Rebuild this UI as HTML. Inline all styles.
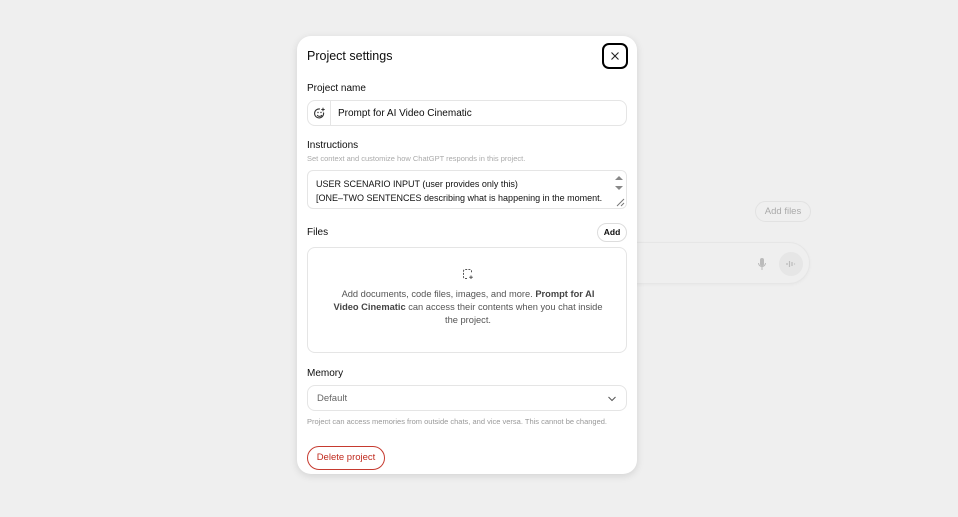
<!DOCTYPE html>
<html><head><style>
*{box-sizing:border-box;margin:0;padding:0}
body{width:958px;height:517px;background:#efefef;font-family:"Liberation Sans",sans-serif;position:relative;overflow:hidden;color:#0d0d0d}
.abs{position:absolute}
.modal{left:297px;top:36px;width:340px;height:438px;background:#fff;border-radius:14px;box-shadow:0 2px 8px rgba(0,0,0,.12)}
.lbl{font-size:10px;color:#0d0d0d}
.box{border:1px solid #e5e5e5;border-radius:8px;background:#fff}
</style></head><body>
<div class="abs" style="left:600px;top:242px;width:210px;height:42px;border-radius:21px;background:#efefef;border:1px solid #e6e6e6;box-shadow:0 1px 3px rgba(0,0,0,.04)"></div>
<div class="abs" style="left:755px;top:201px;width:56px;height:21px;border:1px solid #e2e2e2;border-radius:11px;font-size:9.5px;color:#aaa;text-align:center;line-height:19px">Add files</div>
<svg class="abs" style="left:757px;top:257px" width="10" height="14" viewBox="0 0 10 14"><rect x="3" y="1" width="4" height="8" rx="2" fill="#bbb"/><path d="M1.5 6a3.5 3.5 0 0 0 7 0M5 10v3" stroke="#bbb" fill="none"/></svg>
<div class="abs" style="left:779px;top:252px;width:24px;height:24px;border-radius:50%;background:#e6e6e6"></div>
<svg class="abs" style="left:785px;top:258px" width="12" height="12"><path d="M2 5v2M4.5 3v6M7 4v4M9.5 5.5v1" stroke="#bbb" stroke-width="1.2"/></svg>

<div class="abs modal">
  <div class="abs" style="left:10px;top:13px;font-size:12.5px">Project settings</div>
  <div class="abs" style="left:305px;top:7px;width:26px;height:26px;border:2px solid #000;border-radius:7px;text-align:center"><svg width="22" height="22" viewBox="0 0 22 22"><path d="M7.5 7.5l7 7M14.5 7.5l-7 7" stroke="#222" stroke-width="1.1"/></svg></div>
  <div class="abs lbl" style="left:10px;top:47px">Project name</div>
  <div class="abs box" style="left:10px;top:64px;width:320px;height:26px">
    <div class="abs" style="left:22px;top:0;width:1px;height:24px;background:#e5e5e5"></div>
    <svg class="abs" style="left:5px;top:6px" width="13" height="13" viewBox="0 0 13 13"><path d="M10.5 5.5A4.5 4.5 0 1 1 7 2" stroke="#333" fill="none" stroke-width="1.1"/><path d="M10 .8v3.4M8.3 2.5h3.4" stroke="#333" stroke-width="1"/><circle cx="5" cy="5.5" r=".7" fill="#333"/><circle cx="8" cy="5.5" r=".7" fill="#333"/><path d="M4.2 8a2.6 2.6 0 0 0 4.6 0" stroke="#333" fill="none"/></svg>
    <div class="abs" style="left:30px;top:7px;font-size:10px">Prompt for AI Video Cinematic</div>
  </div>
  <div class="abs lbl" style="left:10px;top:104px">Instructions</div>
  <div class="abs" style="left:10px;top:118px;font-size:7.5px;color:#aaa">Set context and customize how ChatGPT responds in this project.</div>
  <div class="abs box" style="left:10px;top:134px;width:320px;height:39px;overflow:hidden;border-radius:6px">
    <div style="padding:6px 0 0 8px;font-size:9px;line-height:14px;color:#111;white-space:nowrap">USER SCENARIO INPUT (user provides only this)<br>[ONE–TWO SENTENCES describing what is happening in the moment.<br>Action and intent only.]</div>
    <div class="abs" style="right:0;top:0;width:14px;height:39px;background:#fff"></div>
    <svg class="abs" style="right:2px;top:3px" width="10" height="20"><path d="M1 6l4-4 4 4z M1 12l4 4 4-4z" fill="#888"/></svg>
    <svg class="abs" style="right:1px;bottom:1px" width="10" height="10"><path d="M9 2L2 9M9 6L6 9" stroke="#777"/></svg>
  </div>
  <div class="abs lbl" style="left:10px;top:191px">Files</div>
  <div class="abs" style="left:300px;top:187px;width:30px;height:19px;border:1px solid #ddd;border-radius:10px;font-size:8.5px;font-weight:bold;text-align:center;line-height:17px">Add</div>
  <div class="abs box" style="left:10px;top:211px;width:320px;height:106px">
    <svg class="abs" style="left:154px;top:20px" width="12" height="12" viewBox="0 0 12 12"><path d="M5 10.5H3a1.5 1.5 0 0 1-1.5-1.5V3A1.5 1.5 0 0 1 3 1.5h5A1.5 1.5 0 0 1 9.5 3v2.5" stroke="#555" fill="none" stroke-dasharray="2 1.2"/><path d="M9 7.5v3.5M7.2 9.2h3.6" stroke="#555"/></svg>
    <div class="abs" style="left:20px;top:40px;width:280px;text-align:center;font-size:9.3px;line-height:13px;color:#555">Add documents, code files, images, and more. <b style="color:#444">Prompt for AI Video Cinematic</b> can access their contents when you chat inside the project.</div>
  </div>
  <div class="abs lbl" style="left:10px;top:332px">Memory</div>
  <div class="abs box" style="left:10px;top:349px;width:320px;height:26px">
    <div class="abs" style="left:9px;top:7px;font-size:9.5px;color:#666">Default</div>
    <svg class="abs" style="right:9px;top:9px" width="10" height="8"><path d="M1.5 2l3.5 3.5L8.5 2" stroke="#555" fill="none"/></svg>
  </div>
  <div class="abs" style="left:10px;top:381px;font-size:7.5px;color:#999">Project can access memories from outside chats, and vice versa. This cannot be changed.</div>
  <div class="abs" style="left:10px;top:410px;width:78px;height:24px;border:1px solid #c63a2f;border-radius:12px;font-size:9.5px;color:#c02a1e;text-align:center;line-height:22px">Delete project</div>
</div>
</body></html>
